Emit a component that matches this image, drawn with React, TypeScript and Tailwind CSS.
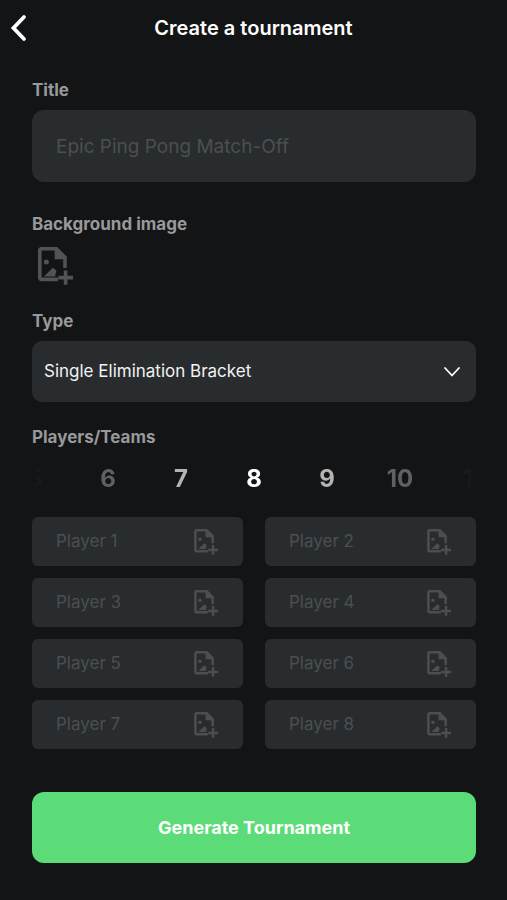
import { useState } from "react";

const PLAYER_COUNT = 8;

function AddImageIcon({ className }: { className: string }) {
  return (
    <svg viewBox="0 0 36 38" className={className} aria-hidden="true">
      <path
        fill="currentColor"
        d="M3.4 0H19.2L28.8 9.8V21H25.2V12.2H16.6V3.6H3.6V30.6H20V34.2H3.4C1.5 34.2 0 32.7 0 30.8V3.4C0 1.5 1.5 0 3.4 0Z"
      />
      <circle cx="8.4" cy="15" r="2.5" fill="currentColor" />
      <path fill="currentColor" d="M6 29.4L14.8 20.8L18.4 23.6L17 29.4Z" />
      <path fill="currentColor" d="M25.8 23.4H29.4V28.8H35V32.4H29.4V37.8H25.8V32.4H20.4V28.8H25.8Z" />
    </svg>
  );
}

function countColor(distance: number) {
  if (distance === 0) return "text-white";
  if (distance === 1) return "text-[#b4b4b5]";
  if (distance === 2) return "text-[#5f6061]";
  return "text-[#353637]";
}

const labelClass = "block text-[17px] leading-[22px] font-bold text-[#98999a]";

export default function App() {
  const [count, setCount] = useState(PLAYER_COUNT);
  const choices = [-3, -2, -1, 0, 1, 2, 3].map((step) => count + step);
  const players = Array.from({ length: count }, (_, i) => i + 1);

  return (
    <div className="min-h-screen bg-[#131415] font-['Inter',sans-serif] text-white">
      <header className="grid h-14 grid-cols-[36px_1fr_36px] items-center">
        <button type="button" aria-label="Back" className="flex justify-center">
          <svg viewBox="0 0 18 28" className="h-7 w-[18px]" aria-hidden="true">
            <path
              d="M15 3L4.5 14L15 25"
              fill="none"
              stroke="currentColor"
              strokeWidth="3.8"
              strokeLinecap="round"
              strokeLinejoin="miter"
            />
          </svg>
        </button>
        <h1 className="text-center text-[20px] leading-6 font-semibold">Create a tournament</h1>
      </header>

      <form className="pt-[23px] pr-[31px] pb-9 pl-8" onSubmit={(e) => e.preventDefault()}>
        <label htmlFor="title" className={labelClass}>
          Title
        </label>
        <input
          id="title"
          type="text"
          placeholder="Epic Ping Pong Match-Off"
          className="mt-[9px] block h-[72px] w-full rounded-xl bg-[#282c2e] px-6 text-[19px] outline-none placeholder:text-[#4b4f51]"
        />

        <label htmlFor="background" className={`${labelClass} mt-[31px]`}>
          Background image
        </label>
        <button
          id="background"
          type="button"
          className="mt-[7px] flex size-12 items-center justify-center text-[#515355]"
        >
          <AddImageIcon className="h-[38px] w-9" />
        </button>

        <label htmlFor="type" className={`${labelClass} mt-5`}>
          Type
        </label>
        <div className="mt-[9px] grid items-center">
          <select
            id="type"
            className="col-start-1 row-start-1 h-[61px] w-full appearance-none rounded-[10px] bg-[#282c2e] px-3 text-[17px] text-[#f1f2f2] outline-none"
          >
            <option>Single Elimination Bracket</option>
          </select>
          <svg
            viewBox="0 0 18 12"
            className="pointer-events-none col-start-1 row-start-1 mr-[15px] h-3 w-[18px] justify-self-end"
            aria-hidden="true"
          >
            <path
              d="M2 2L9 9.5L16 2"
              fill="none"
              stroke="currentColor"
              strokeWidth="1.8"
              strokeLinecap="round"
              strokeLinejoin="round"
            />
          </svg>
        </div>

        <fieldset className="mt-6 min-w-0">
          <legend className={labelClass}>Players/Teams</legend>
          <div className="mt-[13px] flex h-9 items-center justify-center overflow-hidden [mask-image:linear-gradient(to_right,transparent,black_10%,black_90%,transparent)]">
            {choices.map((n) => (
              <label
                key={n}
                className={`relative w-[73px] shrink-0 cursor-pointer text-center text-[24px] leading-9 font-bold ${countColor(Math.abs(n - count))}`}
              >
                <input
                  type="radio"
                  name="count"
                  className="sr-only"
                  checked={n === count}
                  onChange={() => setCount(Math.max(n, 4))}
                />
                {n}
              </label>
            ))}
          </div>
        </fieldset>

        <div className="mt-5 grid grid-cols-2 gap-x-[22px] gap-y-3">
          {players.map((n) => (
            <div key={n} className="flex h-[49px] items-center rounded-md bg-[#282c2e] pr-6 pl-6">
              <input
                type="text"
                aria-label={`Player ${n}`}
                placeholder={`Player ${n}`}
                className="min-w-0 flex-1 bg-transparent text-[17px] outline-none placeholder:text-[#4b4f51]"
              />
              <button type="button" aria-label={`Image for player ${n}`} className="text-[#4b4f51]">
                <AddImageIcon className="h-[26px] w-[25px]" />
              </button>
            </div>
          ))}
        </div>

        <button
          type="submit"
          className="mt-[43px] h-[71px] w-full rounded-xl bg-[#5bdc78] text-[18px] font-bold text-white"
        >
          Generate Tournament
        </button>
      </form>
    </div>
  );
}
